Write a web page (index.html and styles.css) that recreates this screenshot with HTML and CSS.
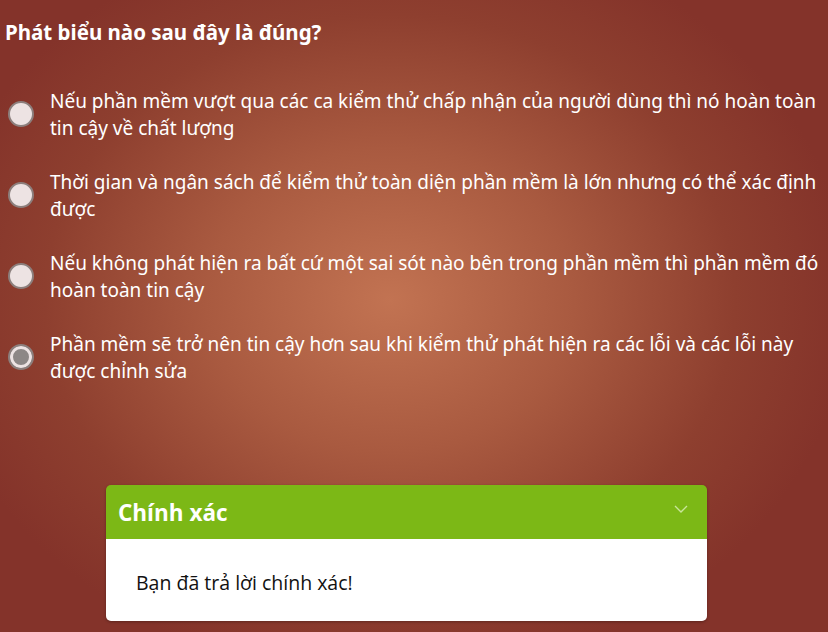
FILE: index.html
```html
<!DOCTYPE html>
<html lang="vi">
<head>
<meta charset="utf-8">
<link rel="stylesheet" href="styles.css">
</head>
<body>
<div class="page">
  <h1 class="question">Phát biểu nào sau đây là đúng?</h1>
  <ul class="options">
    <li class="option"><span class="radio"></span><span class="label">Nếu phần mềm vượt qua các ca kiểm thử chấp nhận của người dùng thì nó hoàn toàn tin cậy về chất lượng</span></li>
    <li class="option"><span class="radio"></span><span class="label">Thời gian và ngân sách để kiểm thử toàn diện phần mềm là lớn nhưng có thể xác định được</span></li>
    <li class="option"><span class="radio"></span><span class="label">Nếu không phát hiện ra bất cứ một sai sót nào bên trong phần mềm thì phần mềm đó hoàn toàn tin cậy</span></li>
    <li class="option"><span class="radio checked"></span><span class="label">Phần mềm sẽ trở nên tin cậy hơn sau khi kiểm thử phát hiện ra các lỗi và các lỗi này được chỉnh sửa</span></li>
  </ul>
  <div class="feedback">
    <div class="feedback-head">
      <span class="feedback-title">Chính xác</span>
      <svg class="chevron" width="14" height="8" viewBox="0 0 14 8"><path d="M1 1 L7 7 L13 1" fill="none" stroke="#c9e59b" stroke-width="1.4"/></svg>
    </div>
    <div class="feedback-body">Bạn đã trả lời chính xác!</div>
  </div>
</div>
</body>
</html>
```
FILE: styles.css
```css
html, body {
  margin: 0;
  height: 100%;
}
body {
  background: radial-gradient(ellipse 460px 380px at 390px 300px, #c27352 0%, #a95a40 40%, #8e3f2f 75%, #84332a 100%);
  background-color: #84332a;
  font-family: "Noto Sans", "Open Sans", sans-serif;
  color: #fff;
  overflow: hidden;
}
.page {
  padding: 19px 0 0 5px;
}
.question {
  margin: 0;
  font-size: 20.5px;
  line-height: 26px;
  font-weight: 700;
}
.options {
  list-style: none;
  margin: 43px 0 0 0;
  padding: 0;
  display: flex;
  flex-direction: column;
  gap: 27px;
}
.option {
  display: flex;
  align-items: center;
  gap: 16px;
}
.radio {
  flex: none;
  width: 26px;
  height: 26px;
  box-sizing: border-box;
  border-radius: 50%;
  border: 2px solid #8c7f7d;
  background: #ede3e3;
  margin-left: 3px;
  margin-top: -2px;
}
.radio.checked {
  background: #8d8786;
  box-shadow: inset 0 0 0 3px #ede3e3;
}
.label {
  font-size: 19px;
  line-height: 27px;
  max-width: 775px;
}
.feedback {
  margin: 100px 0 0 101px;
  width: 601px;
  border-radius: 5px;
  overflow: hidden;
  box-shadow: 0 1px 3px rgba(0,0,0,0.3);
  font-family: "Open Sans", sans-serif;
}
.feedback-head {
  background: #7cb816;
  height: 54px;
  display: flex;
  align-items: center;
  justify-content: space-between;
  padding: 0 19px 0 12px;
}
.feedback-title {
  font-size: 22.5px;
  font-weight: 700;
  color: #fff;
}
.chevron {
  display: block;
  margin-top: -6px;
}
.feedback-body {
  background: #fff;
  color: #111;
  font-size: 19.5px;
  padding: 30px 30px 25px;
  line-height: 27px;
}
```
